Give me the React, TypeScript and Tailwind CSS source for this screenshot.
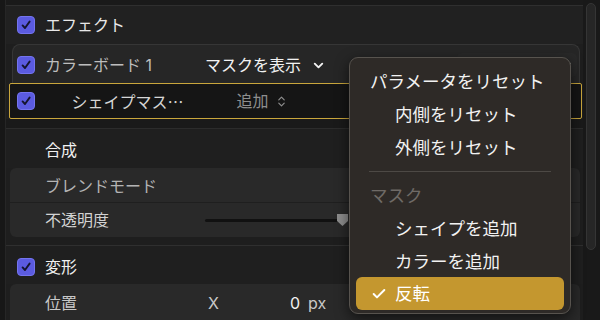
import { ChevronDown, ChevronsUpDown, Check } from "lucide-react";

function Box() {
  return (
    <div className="w-[18px] h-[18px] shrink-0 rounded-[4px] bg-[#5b5be0] border border-[#7474ee] flex items-center justify-center">
      <svg viewBox="0 0 12 12" className="w-[12px] h-[12px]">
        <path d="M2.6 6.4 L5 9 L9.6 2.6" stroke="#15152e" strokeWidth="1.9" fill="none" strokeLinecap="round" strokeLinejoin="round" />
      </svg>
    </div>
  );
}

const menu = [
  { label: "パラメータをリセット", indent: false },
  { label: "内側をリセット", indent: true },
  { label: "外側をリセット", indent: true },
];
const mask = ["シェイプを追加", "カラーを追加"];

export default function App() {
  return (
    <div className="relative w-[600px] h-[320px] overflow-hidden bg-[#1e1e1e] flex font-['Inter','Noto_Sans_CJK_JP',sans-serif] text-[16px]">
      <div className="w-[6px] shrink-0 bg-[#171717] border-r border-[#262626]" />

      <div className="w-[577px] shrink-0 flex flex-col">
        <div className="h-[6px] shrink-0 border-b border-[#2f2f2f] bg-[#1a1a1a]" />

        <div className="h-[38px] shrink-0 flex items-center pl-[11px] gap-[10px] bg-[#212121]">
          <Box />
          <span className="text-[#e8e8e8]">エフェクト</span>
        </div>

        <div className="ml-[6px] w-[568px] h-[39px] shrink-0 rounded-t-[8px] border border-b-0 border-[#363636] bg-[#262626] flex items-center pl-[4px] pt-[2px]">
          <Box />
          <span className="ml-[10px] w-[160px] text-[#bdbdbd]">カラーボード 1</span>
          <span className="text-[#f2f2f2] flex items-center gap-[10px]">
            マスクを表示
            <ChevronDown className="w-[15px] h-[15px]" strokeWidth={3} />
          </span>
          <div className="ml-auto mr-[2px] w-[120px] h-[24px] rounded-[5px] bg-[#292929] flex items-center justify-end pr-[4px]">
            <ChevronDown className="w-[12px] h-[12px] text-[#bbbbbb]" strokeWidth={3} />
          </div>
        </div>

        <div className="ml-[3px] w-[573px] h-[36px] shrink-0 border-[1.5px] border-[#c9a63c] rounded-[2px] bg-[#151515] flex items-center pl-[6.5px]">
          <Box />
          <span className="ml-[37px] w-[165px] text-[#d6d6d6]">
            シェイプマス<span className="font-['Noto_Sans_CJK_JP']">…</span>
          </span>
          <span className="text-[#8e8e8e] flex items-center gap-[6px]">
            追加
            <ChevronsUpDown className="w-[13px] h-[13px]" strokeWidth={2.2} />
          </span>
        </div>

        <div className="h-[10px] shrink-0 bg-[#1a1a1a] border-b border-[#2c2c2c]" />

        <div className="h-[39px] shrink-0 flex items-center pl-[39px] pt-[3px] bg-[#1f1f1f]">
          <span className="text-[#f0f0f0]">合成</span>
        </div>

        <div className="ml-[4px] w-[570px] shrink-0 rounded-[6px] bg-[#292929] flex flex-col">
          <div className="h-[35px] flex items-center pl-[35px] pt-[2px] border-b border-[#1f1f1f]">
            <span className="text-[#b4b4b4]">ブレンドモード</span>
          </div>
          <div className="h-[34px] flex items-center pl-[35px]">
            <span className="w-[160px] text-[#d2d2d2]">不透明度</span>
            <div className="relative w-[142px] h-[3px] bg-[#111111] rounded-full">
              <svg viewBox="0 0 13 14" className="absolute right-[-2px] top-[-6px] w-[13px] h-[14px]">
                <path d="M1 1 H12 V8 L6.5 13 L1 8 Z" fill="#8c8c8c" />
              </svg>
            </div>
          </div>
        </div>

        <div className="h-[9px] shrink-0 border-b border-[#2f2f2f]" />

        <div className="h-[38px] shrink-0 flex items-center pl-[11px] gap-[10px] pt-[3px] bg-[#1f1f1f]">
          <Box />
          <span className="text-[#f0f0f0]">変形</span>
        </div>

        <div className="ml-[4px] w-[570px] flex-1 rounded-t-[6px] bg-[#292929] flex items-center pl-[35px] pt-[2px]">
          <span className="w-[163px] text-[#c8c8c8]">位置</span>
          <span className="w-[82px] text-[#c8c8c8]">X</span>
          <span className="text-[#f0f0f0]">0</span>
          <span className="ml-[8px] text-[#c8c8c8]">px</span>
        </div>
      </div>

      <div className="flex-1 bg-[#191919] pt-[3px] pl-[3px]">
        <div className="w-[10px] h-[247px] rounded-full bg-[#262626] border border-[#353535]" />
      </div>

      <div className="absolute left-[349px] top-[57px] w-[222px] h-[257px] rounded-[9px] bg-[#2e2a27] border border-[#57534e] shadow-[0_4px_14px_rgba(0,0,0,0.6)] px-[6px] pt-[7px] pb-[3px] flex flex-col text-[17.5px]">
        {menu.map((m) => (
          <div key={m.label} className={`h-[33px] flex items-center pt-[2px] text-[#f2f2f2] ${m.indent ? "pl-[39px]" : "pl-[14px]"}`}>
            {m.label}
          </div>
        ))}
        <div className="h-[16px] flex items-center px-[13px]">
          <div className="w-full h-[1px] bg-[#4d4945]" />
        </div>
        <div className="h-[33px] flex items-center pt-[2px] pl-[14px] text-[#6f6a66]">マスク</div>
        {mask.map((m) => (
          <div key={m} className="h-[33px] flex items-center pt-[2px] pl-[39px] text-[#f2f2f2]">
            {m}
          </div>
        ))}
        <div className="h-[33px] flex items-center pl-[15px] pt-[1px] rounded-[6px] bg-[#c4972f] text-white">
          <Check className="w-[16px] h-[16px]" strokeWidth={3} />
          <span className="ml-[8px]">反転</span>
        </div>
      </div>
    </div>
  );
}
